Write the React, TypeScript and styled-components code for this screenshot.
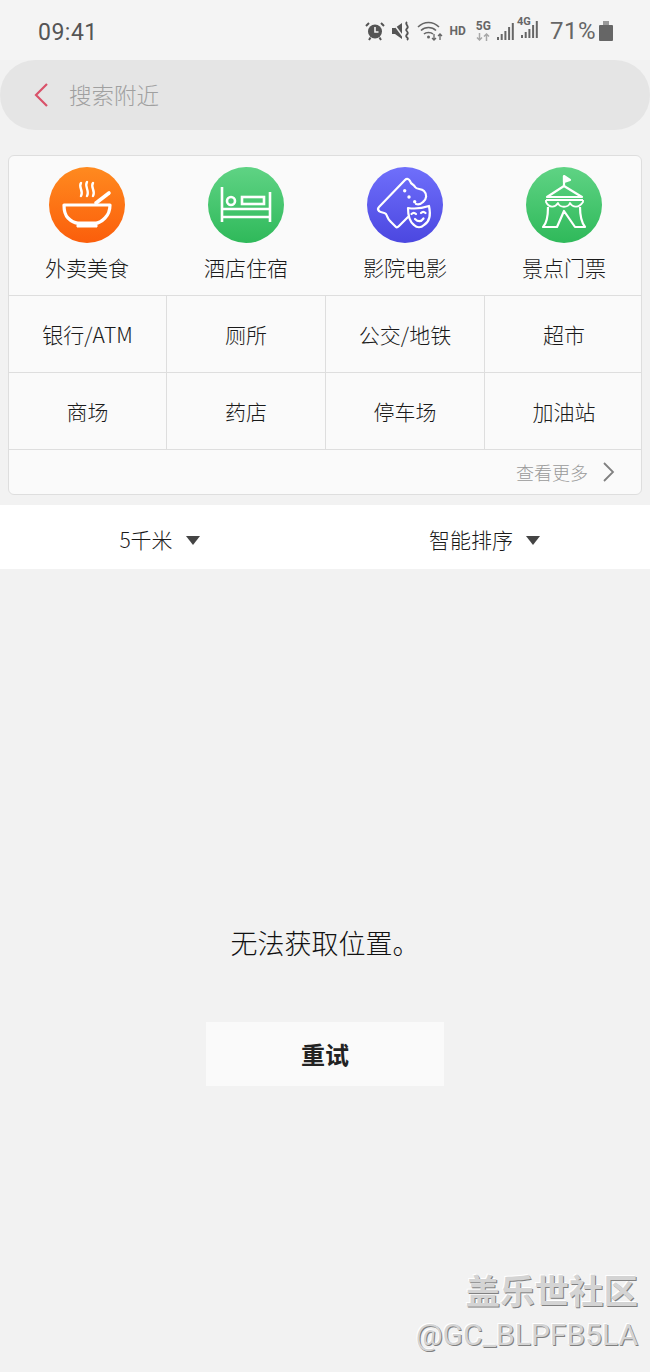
import React from "react";
import styled, { createGlobalStyle } from "styled-components";

const GlobalStyle = createGlobalStyle`
    html, body {
        margin: 0;
        padding: 0;
        background: #f2f2f2;
        font-family: "Noto Sans CJK SC", "Liberation Sans", sans-serif;
    }
`;

const BowlIcon = () => (
    <svg width="76" height="76" viewBox="0 0 76 76" fill="none" stroke="#fff">
        <path d="M32 16c-3 4 3 8 0 13M38 15c-3 4 3 9 0 14M44 16c-3 4 3 8 0 13" strokeWidth="2.4" strokeLinecap="round" />
        <path d="M15 38h46c0 5-1 9-5 13-3 3-7 5-9 5H29c-3 0-7-2-10-5-3-3-4-8-4-13z" strokeWidth="3.2" strokeLinejoin="round" />
        <path d="M47 36l13-10" strokeWidth="3.6" strokeLinecap="round" />
        <path d="M28 57h20v3H28z" fill="#fff" strokeWidth="1" />
    </svg>
);

const BedIcon = () => (
    <svg width="76" height="76" viewBox="0 0 76 76" fill="none" stroke="#fff" strokeWidth="2.6">
        <path d="M14 20v35M62 25v30M14 42h48M14 50h48" />
        <circle cx="23" cy="34" r="4" />
        <rect x="34" y="30" width="22" height="7" />
    </svg>
);

const TicketIcon = () => (
    <svg width="76" height="76" viewBox="0 0 76 76" fill="none" stroke="#fff" strokeWidth="2.2" strokeLinejoin="round" strokeLinecap="round">
        <path d="M12 44C10 42 11 41 12 40L38 13C40 11 42 12 43 14C44 18 47 17 48 20C50 23 54 21 57 24C60 27 60 32 56 35C54 37 52 38 49 37" />
        <path d="M12 44C14 46 17 45 19 47C21 50 20 52 24 55L29 60C30 61 31 60 32 59L41 50" />
        <path d="M41 41C47 42 56 41 62 39C64 48 62 55 57 58C54 61 50 61 47 58C43 55 41 49 41 41z" />
        <path d="M44.500 47c1.500-1.500 3-1.500 4.500 0M54 46c1.500-1.500 3-1.500 4.500 0M48 52c3 3 6 3 8.500-.5" />
        <circle cx="37.700" cy="23.700" r="1.700" fill="#fff" stroke="none" />
        <circle cx="42" cy="30" r="1.700" fill="#fff" stroke="none" />
        <circle cx="47.700" cy="34.700" r="1.700" fill="#fff" stroke="none" />
    </svg>
);

const TentIcon = () => (
    <svg width="76" height="76" viewBox="0 0 76 76" fill="none" stroke="#fff" strokeWidth="2.2" strokeLinejoin="round">
        <path d="M38 19V9" />
        <path d="M38 9l6 4-6 2z" fill="#fff" />
        <path d="M38 19L21 30h35L38 19z" />
        <path d="M20 33h37" />
        <path d="M20 33v2c3 6 9 6 12 1 2 5 10 5 12 0 3 5 9 5 13-1v-2" strokeWidth="1.800" />
        <path d="M22 40c0 9-2 17-5 20h14l7-16 11 16h10c-3-4-5-11-5-20" />
    </svg>
);

const AlarmIcon = () => (
    <svg width="20" height="20" viewBox="0 0 20 20">
        <circle cx="10" cy="10.500" r="7" fill="#555" />
        <path d="M10 6v5h3.500" fill="none" stroke="#f2f2f2" strokeWidth="1.600" />
        <path d="M1 5l3-3M19 5l-3-3M4 19l1.500-2.500M16 19l-1.500-2.500" stroke="#555" strokeWidth="2" />
    </svg>
);

const MuteIcon = () => (
    <svg width="20" height="20" viewBox="0 0 20 20">
        <path d="M1 7h3l7-5v16l-7-5H1z" fill="#555" />
        <path d="M2 2l11 15" stroke="#f2f2f2" strokeWidth="1.500" />
        <path d="M16 1c-3 2.500 3 4 0 6.500s3 3 0 6 3 3 0 5.500" fill="none" stroke="#555" strokeWidth="1.800" />
    </svg>
);

const WifiIcon = () => (
    <svg width="26" height="20" viewBox="0 0 26 20" fill="none" stroke="#666" strokeWidth="1.600">
        <path d="M1 6c6-6 15-6 21 0M4 9.500c4-4 11-4 15 0M7 13c2-2 7-2 9 0" />
        <circle cx="11.500" cy="16" r="1.500" fill="#666" stroke="none" />
        <path d="M17 13v6M15 17l2 2 2-2M23 19v-6M21 15l2-2 2 2" strokeWidth="1.300" />
    </svg>
);

const SignalIcon = () => (
    <svg width="17" height="17" viewBox="0 0 17 17" fill="#666">
        <rect x="0" y="14" width="2" height="3" />
        <rect x="3.700" y="11" width="2" height="6" />
        <rect x="7.400" y="8" width="2" height="9" />
        <rect x="11.100" y="4" width="2" height="13" />
        <rect x="14.800" y="0" width="2" height="17" />
    </svg>
);

const NetArrowsIcon = () => (
    <svg width="14" height="8" viewBox="0 0 14 8" fill="none" stroke="#a8a8a8" strokeWidth="1.500">
        <path d="M3.500 0v7M1 4.500l2.500 2.500 2.500-2.500M10.500 8V1M8 3.500L10.500 1 13 3.500" />
    </svg>
);

const categories = [
    { label: "外卖美食", from: "#ff8a1f", to: "#fb5e0b", icon: <BowlIcon /> },
    { label: "酒店住宿", from: "#5fd384", to: "#2fb95a", icon: <BedIcon /> },
    { label: "影院电影", from: "#6f6ffb", to: "#4b47e0", icon: <TicketIcon /> },
    { label: "景点门票", from: "#5fd384", to: "#2fb95a", icon: <TentIcon /> },
];

const places = ["银行/ATM", "厕所", "公交/地铁", "超市", "商场", "药店", "停车场", "加油站"];

export default function App() {
    return (
        <Page>
            <GlobalStyle />
            <StatusBar>
                <Time>09:41</Time>
                <StatusIcons>
                    <AlarmIcon />
                    <MuteIcon />
                    <WifiIcon />
                    <Hd>HD</Hd>
                    <NetStack>
                        <span>5G</span>
                        <NetArrowsIcon />
                    </NetStack>
                    <SignalIcon />
                    <NetSignal>
                        <NetLabel>4G</NetLabel>
                        <SignalIcon />
                    </NetSignal>
                    <Battery>71%</Battery>
                    <BatteryIcon />
                </StatusIcons>
            </StatusBar>

            <SearchBar>
                <svg width="16" height="26" viewBox="0 0 16 26" fill="none" stroke="#d9526a" strokeWidth="2.2">
                    <path d="M14 2L3 13l11 11" />
                </svg>
                <SearchText>搜索附近</SearchText>
            </SearchBar>

            <Card>
                <CategoryRow>
                    {categories.map((c) => (
                        <Category key={c.label}>
                            <IconCircle $from={c.from} $to={c.to}>
                                {c.icon}
                            </IconCircle>
                            <CategoryLabel>{c.label}</CategoryLabel>
                        </Category>
                    ))}
                </CategoryRow>
                <PlaceGrid>
                    {places.map((p) => (
                        <PlaceCell key={p}>{p}</PlaceCell>
                    ))}
                </PlaceGrid>
                <MoreRow>
                    <MoreText>查看更多</MoreText>
                    <svg width="14" height="20" viewBox="0 0 14 20" fill="none" stroke="#808080" strokeWidth="1.800">
                        <path d="M2 1l9 9-9 9" />
                    </svg>
                </MoreRow>
            </Card>

            <FilterBar>
                <FilterItem>
                    <span>5千米</span>
                    <Caret />
                </FilterItem>
                <FilterItem>
                    <span>智能排序</span>
                    <Caret />
                </FilterItem>
            </FilterBar>

            <EmptyArea>
                <Message>无法获取位置。</Message>
                <RetryButton>重试</RetryButton>
            </EmptyArea>

            <Watermark>
                <WatermarkTitle>盖乐世社区</WatermarkTitle>
                <WatermarkUser>@GC_BLPFB5LA</WatermarkUser>
            </Watermark>
        </Page>
    );
}

const Page = styled.div`
    position: relative;
    width: 650px;
    height: 1372px;
    overflow: hidden;
    background: #f2f2f2;
`;

const StatusBar = styled.div`
    display: flex;
    align-items: center;
    justify-content: space-between;
    height: 60px;
    padding: 2px 37px 0 38px;
    box-sizing: border-box;
    background: #f4f4f4;
`;

const Time = styled.div`
    margin-top: 2px;
    font-family: Roboto, sans-serif;
    font-size: 23px;
    color: #555;
    letter-spacing: 0.5px;
`;

const StatusIcons = styled.div`
    display: flex;
    align-items: center;
    gap: 6px;
    height: 24px;
`;

const Hd = styled.span`
    font-family: Roboto, sans-serif;
    font-size: 12px;
    font-weight: 700;
    color: #666;
    margin-left: 1px;
`;

const NetStack = styled.div`
    display: flex;
    flex-direction: column;
    align-items: center;
    gap: 1px;
    margin-left: 4px;
    font-family: Roboto, sans-serif;
    font-size: 12px;
    font-weight: 700;
    line-height: 11px;
    color: #666;
`;

const NetSignal = styled.div`
    position: relative;
    padding-left: 4px;
    margin-left: -3px;
`;

const NetLabel = styled.span`
    position: absolute;
    left: 0;
    top: -4px;
    font-family: Roboto, sans-serif;
    font-size: 11px;
    font-weight: 700;
    color: #666;
`;

const Battery = styled.span`
    font-family: Roboto, sans-serif;
    font-size: 24px;
    color: #666;
    margin-left: 6px;
    letter-spacing: 0.5px;
`;

const BatteryIcon = styled.span`
    position: relative;
    width: 14px;
    height: 16px;
    margin: 4px 0 0 -3px;
    background: #666;
    border-radius: 1px;

    &::before {
        content: "";
        position: absolute;
        left: 4px;
        top: -4px;
        width: 6px;
        height: 4px;
        background: #999;
    }
`;

const SearchBar = styled.div`
    display: flex;
    align-items: center;
    gap: 20px;
    height: 70px;
    padding-left: 33px;
    box-sizing: border-box;
    border-radius: 35px;
    background: #e5e5e5;
`;

const SearchText = styled.span`
    font-size: 22.500px;
    font-weight: 300;
    line-height: 30px;
    padding-bottom: 2px;
    color: #a0a0a0;
`;

const Card = styled.div`
    margin: 25px 8px 0;
    height: 340px;
    box-sizing: border-box;
    display: flex;
    flex-direction: column;
    background: #fafafa;
    border: 1px solid #dedede;
    border-radius: 6px;
`;

const CategoryRow = styled.div`
    display: grid;
    grid-template-columns: repeat(4, 159px);
    height: 139px;
    margin-left: -1.500px;
`;

const Category = styled.div`
    display: flex;
    flex-direction: column;
    align-items: center;
    padding-top: 11px;
`;

const IconCircle = styled.div<{ $from: string; $to: string }>`
    display: flex;
    width: 76px;
    height: 76px;
    border-radius: 50%;
    background: linear-gradient(${(p) => p.$from}, ${(p) => p.$to});
`;

const CategoryLabel = styled.div`
    margin-top: 8px;
    font-size: 21px;
    font-weight: 300;
    line-height: 32px;
    white-space: nowrap;
    color: #1a1a1a;
`;

const PlaceGrid = styled.div`
    display: grid;
    grid-template-columns: 158px 159px 159px 156px;
    grid-auto-rows: 77px;
    border-top: 1px solid #dedede;
`;

const PlaceCell = styled.div`
    display: flex;
    align-items: center;
    justify-content: center;
    box-sizing: border-box;
    font-size: 21px;
    font-weight: 300;
    color: #1a1a1a;
    border-bottom: 1px solid #dedede;
    border-right: 1px solid #dedede;

    &:nth-child(4n) {
        border-right: none;
        padding-left: 2px;
    }
`;

const MoreRow = styled.div`
    flex: 1;
    display: flex;
    align-items: center;
    justify-content: flex-end;
    gap: 14px;
    padding-right: 25px;
`;

const MoreText = styled.span`
    font-size: 18px;
    font-weight: 300;
    color: #999;
`;

const FilterBar = styled.div`
    display: grid;
    grid-template-columns: 1fr 1fr;
    height: 64px;
    margin-top: 10px;
    background: #fff;
`;

const FilterItem = styled.div`
    display: flex;
    align-items: center;
    justify-content: center;
    gap: 13px;
    padding: 4px 6px 0 0;
    box-sizing: border-box;
    font-size: 21px;
    font-weight: 300;
    color: #1a1a1a;
`;

const Caret = styled.span`
    width: 0;
    height: 0;
    margin-top: 2px;
    border-left: 7px solid transparent;
    border-right: 7px solid transparent;
    border-top: 9px solid #444;
`;

const EmptyArea = styled.div`
    display: flex;
    flex-direction: column;
    align-items: center;
    padding-top: 355px;
`;

const Message = styled.div`
    font-size: 27px;
    font-weight: 300;
    line-height: 38px;
    color: #111;
`;

const RetryButton = styled.button`
    width: 238px;
    height: 64px;
    margin-top: 60px;
    padding: 0 0 2px;
    border: none;
    background: #fafafa;
    font-family: inherit;
    font-size: 24px;
    font-weight: 700;
    color: #222;
`;

const Watermark = styled.div`
    position: absolute;
    right: 12px;
    bottom: 18px;
    display: flex;
    flex-direction: column;
    align-items: flex-end;
    color: #d4d4d4;
    text-shadow: 1px 1px 0 #808080, -1px -1px 0 #fff;
`;

const WatermarkTitle = styled.div`
    font-size: 34.500px;
    line-height: 44px;
    font-weight: 700;
    margin-bottom: 5px;
`;

const WatermarkUser = styled.div`
    font-family: Roboto, sans-serif;
    font-size: 30px;
    line-height: 38px;
`;
